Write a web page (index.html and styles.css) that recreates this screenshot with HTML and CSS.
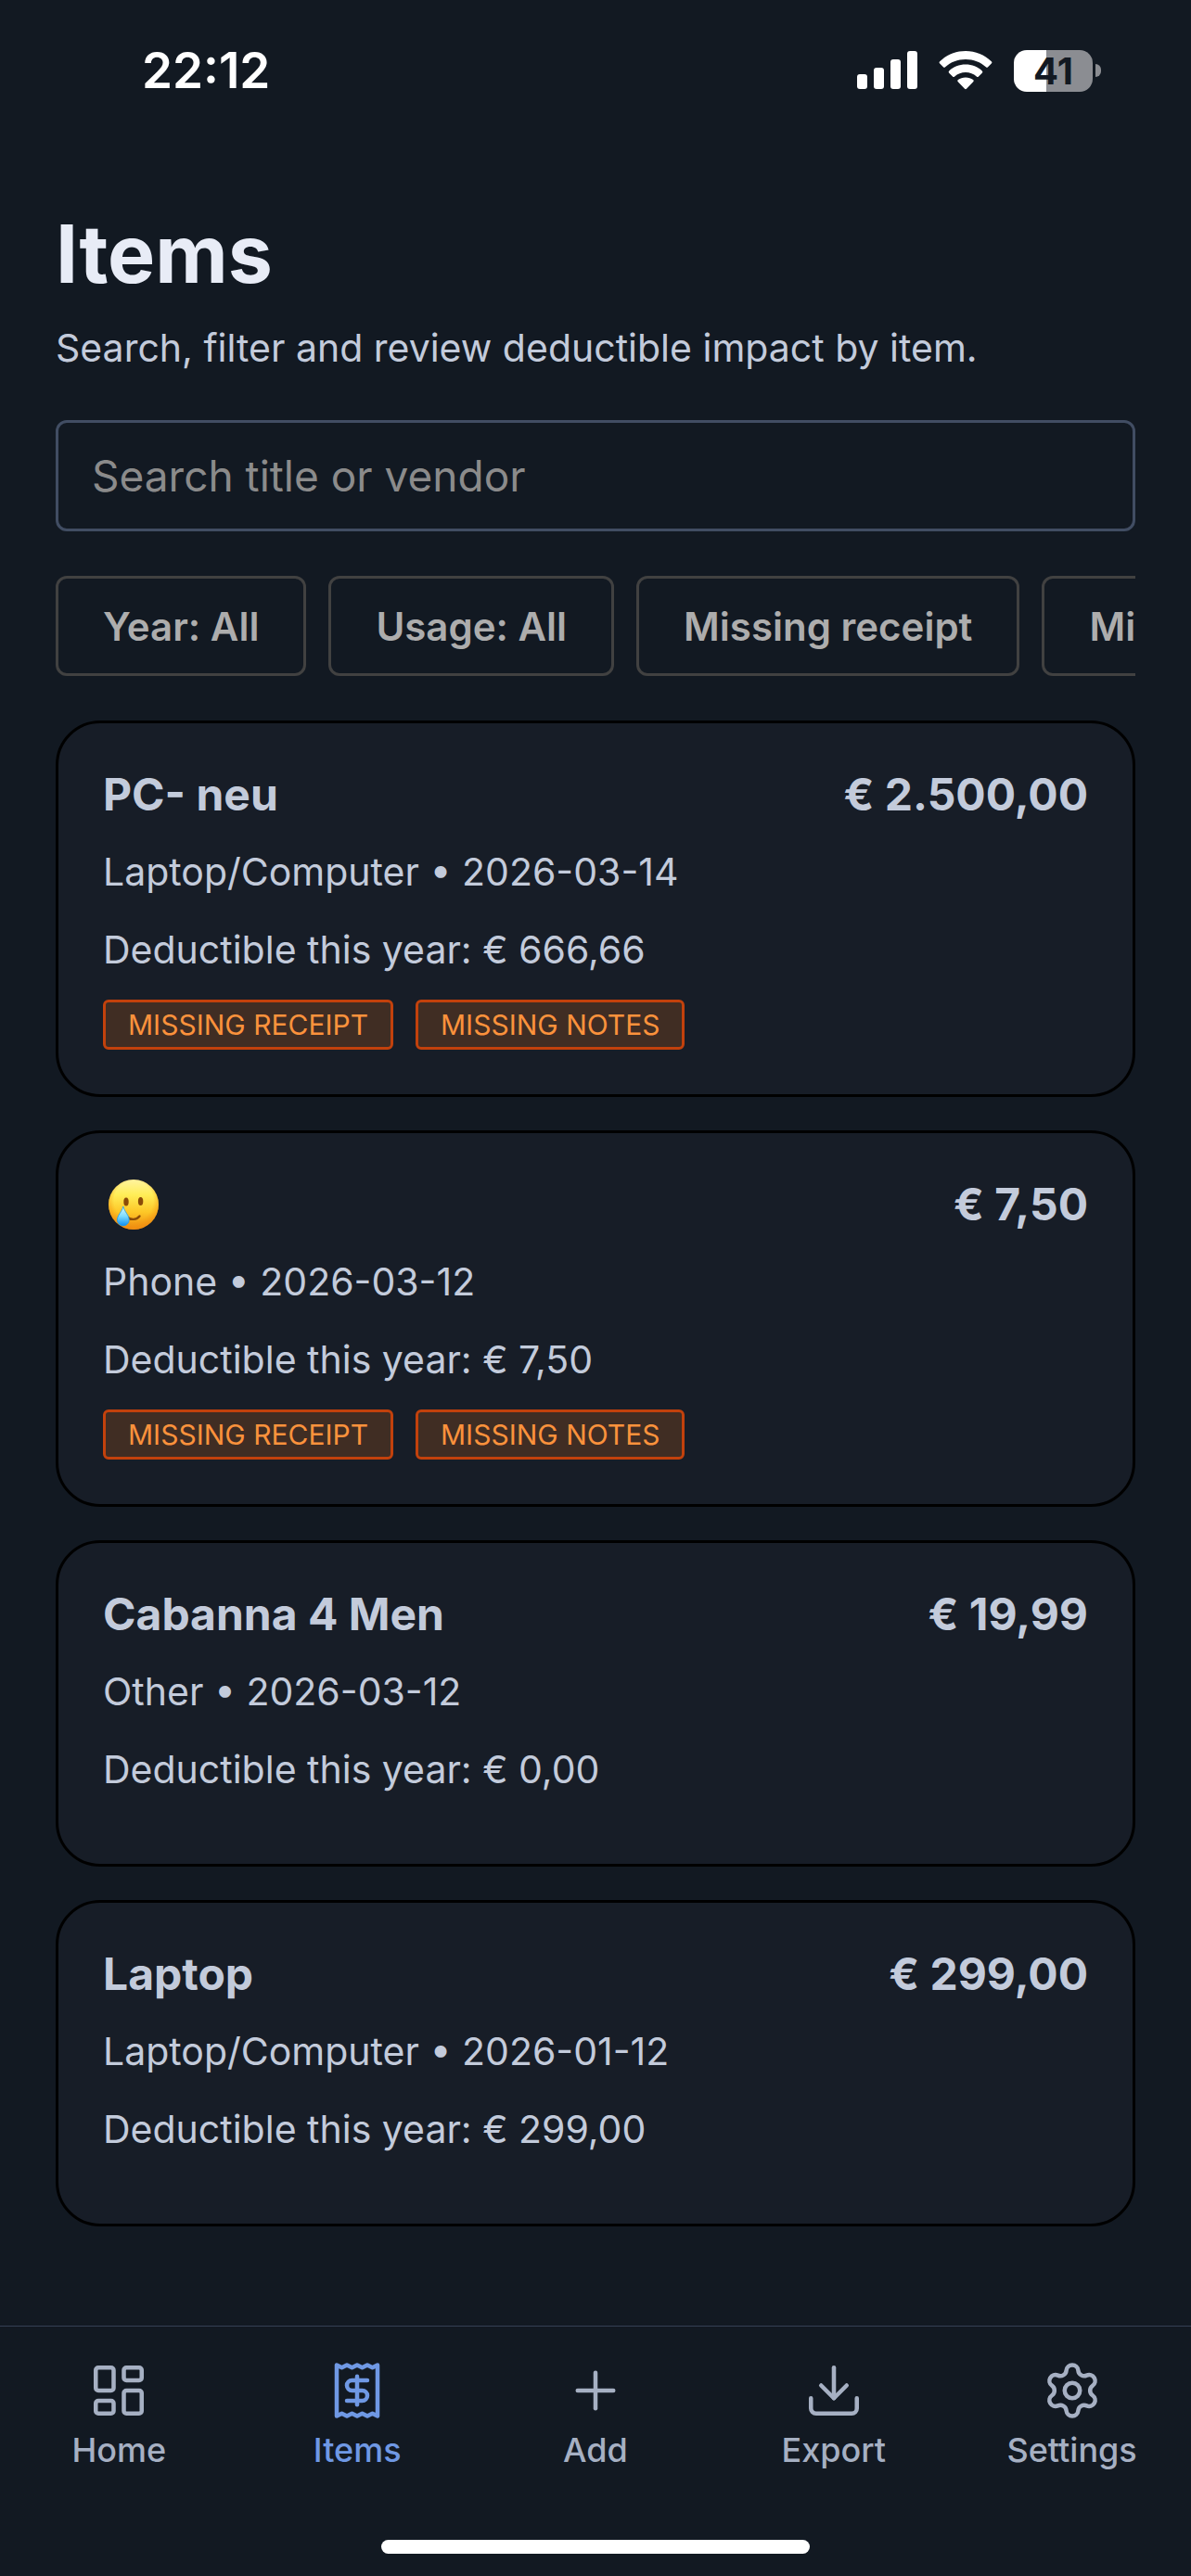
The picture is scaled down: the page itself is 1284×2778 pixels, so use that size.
FILE: index.html
```html
<!DOCTYPE html>
<html lang="en">
<head>
    <meta charset="UTF-8">
    <meta name="viewport" content="width=device-width, initial-scale=1.0">
    <title>Items</title>
    <link rel="stylesheet" href="styles.css">
</head>
<body>

    <div class="status-bar">
        <span class="time">22:12</span>
        <div class="status-icons">
            <svg class="signal" viewBox="0 0 65 42" fill="#fff">
                <rect x="0" y="25" width="11" height="16" rx="3"/>
                <rect x="18" y="18" width="11" height="23" rx="3"/>
                <rect x="36" y="9" width="11" height="32" rx="3"/>
                <rect x="54" y="0" width="11" height="41" rx="3"/>
            </svg>
            <svg class="wifi" viewBox="0 0 58 42" fill="#fff">
                <path d="M1.2 13.6a1.6 1.6 0 0 1 0-2.3C8.500 4.200 18.300 0 29 0s20.500 4.200 27.800 11.300a1.600 1.600 0 0 1 0 2.300l-3.700 3.700a1.600 1.600 0 0 1-2.200 0C45.200 11.900 37.500 8.900 29 8.900S12.800 11.900 7.100 17.300a1.600 1.600 0 0 1-2.200 0z"/>
                <path d="M11.200 23.700a1.600 1.600 0 0 1 0-2.300C15.900 17 22.100 14.600 29 14.600s13.100 2.400 17.800 6.800a1.600 1.600 0 0 1 0 2.300l-3.800 3.800a1.600 1.600 0 0 1-2.200 0C37.600 24.700 33.500 23.100 29 23.100s-8.600 1.600-11.800 4.400a1.600 1.600 0 0 1-2.200 0z"/>
                <path d="M20.800 33.300a1.500 1.500 0 0 1 .1-2.300c2.200-1.700 5-2.600 8.100-2.600s5.900.9 8.100 2.600a1.500 1.500 0 0 1 .1 2.300l-7 7.300a1.600 1.600 0 0 1-2.400 0z"/>
            </svg>
            <div class="battery">
                <span class="battery-level">41</span>
                <span class="battery-cap"></span>
            </div>
        </div>
    </div>

    <main class="content">
        <h1>Items</h1>
        <p class="subtitle">Search, filter and review deductible impact by item.</p>

        <input class="search" type="text" placeholder="Search title or vendor" aria-label="Search title or vendor">

        <div class="filters">
            <button class="chip">Year: All</button>
            <button class="chip">Usage: All</button>
            <button class="chip">Missing receipt</button>
            <button class="chip">Missing notes</button>
        </div>

        <div class="items">
            <article class="card">
                <div class="card-header">
                    <h2>PC- neu</h2>
                    <span class="amount">€ 2.500,00</span>
                </div>
                <p>Laptop/Computer • 2026-03-14</p>
                <p>Deductible this year: € 666,66</p>
                <div class="badges">
                    <span class="badge">MISSING RECEIPT</span>
                    <span class="badge">MISSING NOTES</span>
                </div>
            </article>

            <article class="card">
                <div class="card-header">
                    <h2>
                        <svg class="emoji" viewBox="0 0 54 54" role="img" aria-label="Smiling face with tear">
                            <defs>
                                <linearGradient id="face" x1="0" y1="0" x2="0" y2="1">
                                    <stop offset="0" stop-color="#fff3a0"/>
                                    <stop offset="0.3" stop-color="#ffee58"/>
                                    <stop offset="0.65" stop-color="#fdc727"/>
                                    <stop offset="1" stop-color="#ef8b10"/>
                                </linearGradient>
                                <radialGradient id="edge" cx="0.5" cy="0.42" r="0.6">
                                    <stop offset="0.65" stop-color="#f39a12" stop-opacity="0"/>
                                    <stop offset="1" stop-color="#ef8a10" stop-opacity="0.9"/>
                                </radialGradient>
                                <linearGradient id="tear" x1="0" y1="0" x2="0" y2="1">
                                    <stop offset="0" stop-color="#dcf8ff"/>
                                    <stop offset="0.5" stop-color="#7edcff"/>
                                    <stop offset="1" stop-color="#0d8ff0"/>
                                </linearGradient>
                            </defs>
                            <circle cx="27" cy="27" r="27" fill="url(#face)"/>
                            <circle cx="27" cy="27" r="27" fill="url(#edge)"/>
                            <ellipse cx="19" cy="24" rx="2.700" ry="4.500" fill="#8a4b08"/>
                            <ellipse cx="34.600" cy="23.500" rx="2.700" ry="4.500" fill="#8a4b08"/>
                            <path d="M20 40.500c4 3.600 10.500 3 13.500-1" fill="none" stroke="#8a4b08" stroke-width="2.400" stroke-linecap="round"/>
                            <path d="M15.800 29c1.500 6 6.400 9.500 6.400 14.500a6.400 6.400 0 0 1-12.800 0c0-5 5-8.500 6.400-14.500z" fill="url(#tear)" stroke="#1c9cf0" stroke-width="0.800"/>
                        </svg>
                    </h2>
                    <span class="amount">€ 7,50</span>
                </div>
                <p>Phone • 2026-03-12</p>
                <p>Deductible this year: € 7,50</p>
                <div class="badges">
                    <span class="badge">MISSING RECEIPT</span>
                    <span class="badge">MISSING NOTES</span>
                </div>
            </article>

            <article class="card">
                <div class="card-header">
                    <h2>Cabanna 4 Men</h2>
                    <span class="amount">€ 19,99</span>
                </div>
                <p>Other • 2026-03-12</p>
                <p>Deductible this year: € 0,00</p>
                <div class="badges"></div>
            </article>

            <article class="card">
                <div class="card-header">
                    <h2>Laptop</h2>
                    <span class="amount">€ 299,00</span>
                </div>
                <p>Laptop/Computer • 2026-01-12</p>
                <p>Deductible this year: € 299,00</p>
                <div class="badges"></div>
            </article>
        </div>
    </main>

    <footer class="tab-bar">
        <nav class="tabs">
            <a class="tab" href="#">
                <svg viewBox="0 0 24 24">
                    <rect x="3" y="3" width="7" height="9" rx="1"/>
                    <rect x="14" y="3" width="7" height="5" rx="1"/>
                    <rect x="14" y="12" width="7" height="9" rx="1"/>
                    <rect x="3" y="16" width="7" height="5" rx="1"/>
                </svg>
                Home
            </a>
            <a class="tab active" href="#">
                <svg viewBox="0 0 24 24">
                    <path d="M4 2v20l2-1 2 1 2-1 2 1 2-1 2 1 2-1 2 1V2l-2 1-2-1-2 1-2-1-2 1-2-1-2 1Z"/>
                    <path d="M16 8h-6a2 2 0 1 0 0 4h4a2 2 0 1 1 0 4H8"/>
                    <path d="M12 17.500v-11"/>
                </svg>
                Items
            </a>
            <a class="tab" href="#">
                <svg viewBox="0 0 24 24">
                    <path d="M5 12h14"/>
                    <path d="M12 5v14"/>
                </svg>
                Add
            </a>
            <a class="tab" href="#">
                <svg viewBox="0 0 24 24">
                    <path d="M12 15V3"/>
                    <path d="M21 15v4a2 2 0 0 1-2 2H5a2 2 0 0 1-2-2v-4"/>
                    <path d="m7 10 5 5 5-5"/>
                </svg>
                Export
            </a>
            <a class="tab" href="#">
                <svg viewBox="0 0 24 24">
                    <path d="M9.671 4.136a2.340 2.340 0 0 1 4.659 0 2.340 2.340 0 0 0 3.319 1.915 2.340 2.340 0 0 1 2.330 4.033 2.340 2.340 0 0 0 0 3.831 2.340 2.340 0 0 1-2.330 4.033 2.340 2.340 0 0 0-3.319 1.915 2.340 2.340 0 0 1-4.659 0 2.340 2.340 0 0 0-3.320-1.915 2.340 2.340 0 0 1-2.330-4.033 2.340 2.340 0 0 0 0-3.831A2.340 2.340 0 0 1 6.350 6.051a2.340 2.340 0 0 0 3.319-1.915"/>
                    <circle cx="12" cy="12" r="3"/>
                </svg>
                Settings
            </a>
        </nav>
        <div class="home-indicator"></div>
    </footer>

</body>
</html>
```
FILE: styles.css
```css
* {
    box-sizing: border-box;
}
body {
    font-family: Inter, "Liberation Sans", sans-serif;
    margin: 0;
    min-height: 100vh;
    display: flex;
    flex-direction: column;
    background-color: #121922;
    color: #c3cbdb;
}
h1, h2, p {
    margin: 0;
}

/* Status bar */
.status-bar {
    display: flex;
    justify-content: space-between;
    align-items: center;
    height: 152px;
    padding: 0 97px 0 153px;
    color: #fff;
}
.time {
    font-size: 53px;
    font-weight: 600;
}
.status-icons {
    display: flex;
    align-items: center;
    gap: 23px;
}
.signal {
    width: 65px;
    height: 42px;
}
.wifi {
    width: 58px;
    height: 42px;
}
.battery {
    display: flex;
    align-items: center;
    gap: 3px;
}
.battery-level {
    width: 85px;
    height: 45px;
    border-radius: 14px;
    background: linear-gradient(90deg, #fff 41%, #8b8d92 41%);
    color: #121922;
    font-size: 40px;
    font-weight: 700;
    line-height: 45px;
    text-align: center;
}
.battery-cap {
    width: 6px;
    height: 14px;
    border-radius: 0 6px 6px 0;
    background-color: #8b8d92;
}

/* Page content */
.content {
    flex: 1;
    padding: 70px 60px 107px;
}
h1 {
    color: #e8ecf6;
    font-size: 86px;
    font-weight: 700;
    line-height: 104px;
}
.subtitle {
    margin-top: 19px;
    font-size: 41px;
    line-height: 60px;
}
.search {
    display: block;
    width: 100%;
    height: 120px;
    margin-top: 48px;
    padding: 0 36px;
    background: transparent;
    border: 3px solid #414d63;
    border-radius: 12px;
    color: #c3cbdb;
    font-family: inherit;
    font-size: 46px;
}
.search::placeholder {
    color: #8b8b8b;
}
.filters {
    display: flex;
    gap: 24px;
    margin-top: 48px;
    overflow: hidden;
}
.chip {
    flex: none;
    height: 108px;
    padding: 0 48px;
    background: transparent;
    border: 3px solid #414141;
    border-radius: 12px;
    color: #adadad;
    font-family: inherit;
    font-size: 42px;
    font-weight: 600;
    cursor: pointer;
}
.items {
    display: flex;
    flex-direction: column;
    gap: 36px;
    margin-top: 48px;
}
.card {
    display: flex;
    flex-direction: column;
    gap: 24px;
    padding: 48px;
    background-color: #171d27;
    border: 3px solid #000;
    border-radius: 48px;
    font-size: 41px;
    line-height: 60px;
}
.card-header {
    display: flex;
    justify-content: space-between;
    font-size: 48px;
    font-weight: 700;
    line-height: 58px;
}
.card-header h2 {
    font-size: inherit;
}
.emoji {
    display: block;
    width: 54px;
    height: 54px;
    margin: 2px 6px;
}
.badges {
    display: flex;
    gap: 24px;
}
.badge {
    padding: 0 24px;
    background-color: #402d23;
    border: 3px solid #c2410c;
    border-radius: 6px;
    color: #fb923c;
    font-size: 30px;
    line-height: 48px;
}

/* Bottom tabs */
.tab-bar {
    position: sticky;
    bottom: 0;
    padding-bottom: 24px;
    background-color: #121922;
    border-top: 1px solid #344054;
}
.tabs {
    display: flex;
    padding-top: 36px;
}
.tab {
    flex: 1;
    display: flex;
    flex-direction: column;
    align-items: center;
    gap: 9px;
    color: #a6b0c3;
    font-size: 36px;
    font-weight: 500;
    line-height: 44px;
    text-decoration: none;
}
.tab.active {
    color: #6f98e4;
}
.tab svg {
    width: 66px;
    height: 66px;
    fill: none;
    stroke: currentColor;
    stroke-width: 1.65;
    stroke-linecap: round;
    stroke-linejoin: round;
}
.home-indicator {
    width: 36%;
    height: 15px;
    margin: 75px auto 0;
    border-radius: 8px;
    background-color: #fff;
}
```
